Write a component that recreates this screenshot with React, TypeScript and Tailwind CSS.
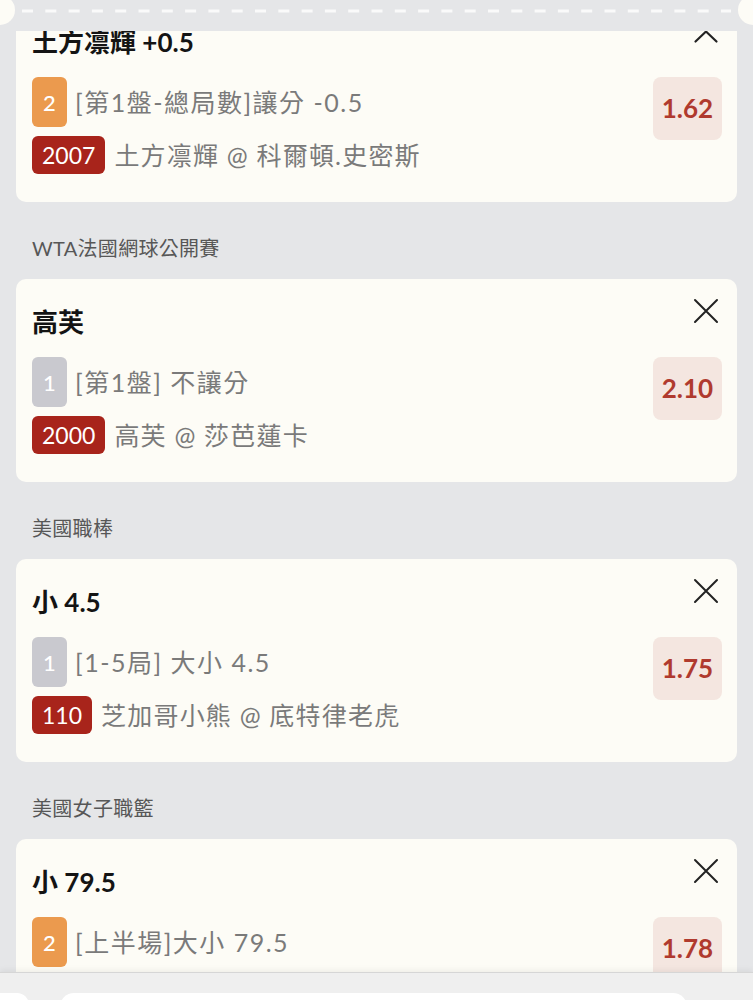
import React from 'react';

type Card = {
  league?: string;
  title: string;
  icon: 'up' | 'x';
  num: string;
  numTone: 'orange' | 'gray';
  desc: string;
  code?: string;
  match?: string;
  odds: string;
};

const cards: Card[] = [
  {
    title: '土方凛輝 +0.5',
    icon: 'up',
    num: '2',
    numTone: 'orange',
    desc: '[第1盤-總局數]讓分 -0.5',
    code: '2007',
    match: '土方凛輝 @ 科爾頓.史密斯',
    odds: '1.62',
  },
  {
    league: 'WTA法國網球公開賽',
    title: '高芙',
    icon: 'x',
    num: '1',
    numTone: 'gray',
    desc: '[第1盤] 不讓分',
    code: '2000',
    match: '高芙 @ 莎芭蓮卡',
    odds: '2.10',
  },
  {
    league: '美國職棒',
    title: '小 4.5',
    icon: 'x',
    num: '1',
    numTone: 'gray',
    desc: '[1-5局] 大小 4.5',
    code: '110',
    match: '芝加哥小熊 @ 底特律老虎',
    odds: '1.75',
  },
  {
    league: '美國女子職籃',
    title: '小 79.5',
    icon: 'x',
    num: '2',
    numTone: 'orange',
    desc: '[上半場]大小 79.5',
    odds: '1.78',
  },
];

function CloseIcon() {
  return (
    <svg width="24" height="24" viewBox="0 0 24 24" className="mr-[4px] shrink-0 overflow-visible">
      <path d="M1 1 L23 23 M23 1 L1 23" stroke="#222" strokeWidth="2" strokeLinecap="round" fill="none" />
    </svg>
  );
}

function UpIcon() {
  return (
    <svg width="24" height="24" viewBox="0 0 24 24" className="mr-[4px] shrink-0 overflow-visible">
      <polyline points="1.5,22.5 12,12.5 22.5,22.5" stroke="#222" strokeWidth="2.2" strokeLinecap="round" strokeLinejoin="round" fill="none" />
    </svg>
  );
}

function BetCard({ c }: { c: Card }) {
  return (
    <div className="mx-4 rounded-[10px] bg-[#fdfcf6] pt-[20px] pb-[28px] pl-4 pr-[15px]">
      <div className="flex items-start justify-between">
        <div className="mt-[6px] text-[26px] leading-[34px] font-bold text-[#141414]">{c.title}</div>
        {c.icon === 'x' ? <CloseIcon /> : <UpIcon />}
      </div>
      <div className="mt-[18px] flex items-start justify-between">
        <div className="flex flex-col gap-[9px]">
          <div className="flex h-[50px] items-center gap-[8px]">
            <div
              className={
                'flex h-[50px] w-[35px] items-center justify-center rounded-[6px] text-[22px] font-medium text-white ' +
                (c.numTone === 'orange' ? 'bg-[#eb9a4e]' : 'bg-[#c9c9cf]')
              }
            >
              {c.num}
            </div>
            <div className="text-[25px] leading-[34px] tracking-[1.5px] text-[#7a7a7a]">{c.desc}</div>
          </div>
          {c.code && (
            <div className="flex h-[38px] items-center gap-[9px]">
              <div className="flex h-[38px] items-center rounded-[6px] bg-[#a8241b] px-[10px] text-[23px] text-white">
                {c.code}
              </div>
              <div className="text-[25px] leading-[34px] tracking-[1.2px] text-[#7a7a7a]">{c.match}</div>
            </div>
          )}
        </div>
        <div className="flex h-[63px] w-[69px] shrink-0 items-center justify-center rounded-[8px] bg-[#f4e6e0] text-[26px] font-bold text-[#b03a2e]">
          {c.odds}
        </div>
      </div>
    </div>
  );
}

export default function App() {
  return (
    <div className="relative h-[1000px] w-full overflow-hidden bg-[#e5e6e8] [font-family:Lato,'Noto_Sans_CJK_TC','Noto_Sans',sans-serif]">
      <div className="-mt-px">
        {cards.map((c, i) => (
          <div key={i}>
            {c.league && (
              <div className="pt-[32px] pb-[17px] pl-8 text-[20px] leading-[28px] tracking-[0.3px] text-[#575757]">{c.league}</div>
            )}
            <BetCard c={c} />
          </div>
        ))}
      </div>

      {/* top ticket strip */}
      <div className="absolute left-0 right-0 top-0 h-[31px] bg-[#e5e6e8]">
        <div className="absolute left-[-15px] top-[-5px] h-[30px] w-[30px] rounded-full bg-[#fdfcf6]" />
        <div className="absolute right-[-15px] top-[-5px] h-[30px] w-[30px] rounded-full bg-[#fdfcf6]" />
        <svg className="absolute left-0 top-0" width="753" height="31" viewBox="0 0 753 31">
          <line x1="22" y1="11" x2="731" y2="11" stroke="#fafafa" strokeWidth="3" strokeDasharray="11 12.3" />
        </svg>
      </div>

      {/* bottom bar */}
      <div className="absolute left-0 right-0 top-[972px] h-[28px] border-t border-[#d6d6d6] bg-[#efefef] shadow-[0_-2px_6px_rgba(0,0,0,0.06)]">
        <div className="flex pt-[20px]">
          <div className="ml-[-12px] h-[30px] w-[41px] rounded-[12px] bg-white" />
          <div className="ml-[31px] h-[30px] w-[627px] rounded-[14px] bg-white" />
        </div>
      </div>
    </div>
  );
}
